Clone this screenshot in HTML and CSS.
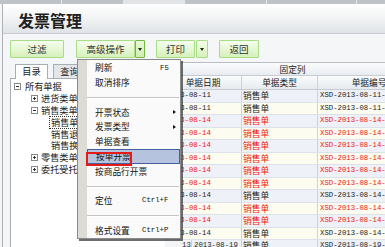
FILE: index.html
```html
<!DOCTYPE html>
<html>
<head>
<meta charset="utf-8">
<link rel="stylesheet" href="styles.css">
</head>
<body>
<div class="topstrip">
  <span class="seg s1"></span><span class="seg s2"></span><span class="seg s3"></span><span class="seg s4"></span><span class="seg s5"></span><span class="seg s6"></span>
</div>
<div class="frame">
  <div class="header"><h1 class="title">发票管理</h1></div>
  <div class="toolbar">
    <button class="btn b-filter">过滤</button>
    <div class="split s-adv"><button class="btn b-adv">高级操作</button><button class="dd dd-on"><span class="tri"></span></button></div>
    <div class="split s-print"><button class="btn b-print">打印</button><button class="dd dd-print"><span class="tri"></span></button></div>
    <button class="btn b-back">返回</button>
  </div>
  <div class="content">
    <div class="side">
      <div class="tabs"><span class="tab tab-on">目录</span><span class="tab">查询</span></div>
      <div class="tree">
        <div class="node l0"><span class="exp minus"></span><span class="lbl">所有单据</span></div>
        <div class="node l1"><span class="exp plus"></span><span class="lbl">进货类单据</span></div>
        <div class="node l1"><span class="exp minus"></span><span class="lbl">销售类单据</span></div>
        <div class="node l2"><span class="lbl sel">销售单</span></div>
        <div class="node l2"><span class="lbl">销售退货</span></div>
        <div class="node l2"><span class="lbl">销售换货</span></div>
        <div class="node l1"><span class="exp plus"></span><span class="lbl">零售类单据</span></div>
        <div class="node l1"><span class="exp plus"></span><span class="lbl">委托受托单</span></div>
      </div>
    </div>
    <div class="grid">
      <div class="g-group">固定列</div>
      <div class="g-head"><span class="c c-date">单据日期</span><span class="c c-type">单据类型</span><span class="c c-no">单据编号</span></div>
      <div class="row odd"><span class="c c-date m">2013-08-11</span><span class="c c-type">销售单</span><span class="c c-no m">XSD-2013-08-11-0001</span></div>
      <div class="row even"><span class="c c-date m">2013-08-11</span><span class="c c-type">销售单</span><span class="c c-no m">XSD-2013-08-11-0002</span></div>
      <div class="row odd red"><span class="c c-date m">2013-08-14</span><span class="c c-type">销售单</span><span class="c c-no m">XSD-2013-08-14-0001</span></div>
      <div class="row even red"><span class="c c-date m">2013-08-14</span><span class="c c-type">销售单</span><span class="c c-no m">XSD-2013-08-14-0002</span></div>
      <div class="row odd red"><span class="c c-date m">2013-08-14</span><span class="c c-type">销售单</span><span class="c c-no m">XSD-2013-08-14-0003</span></div>
      <div class="row even red"><span class="c c-date m">2013-08-14</span><span class="c c-type">销售单</span><span class="c c-no m">XSD-2013-08-14-0004</span></div>
      <div class="row odd red"><span class="c c-date m">2013-08-14</span><span class="c c-type">销售单</span><span class="c c-no m">XSD-2013-08-14-0005</span></div>
      <div class="row even red"><span class="c c-date m">2013-08-14</span><span class="c c-type">销售单</span><span class="c c-no m">XSD-2013-08-14-0006</span></div>
      <div class="row odd"><span class="c c-date m">2013-08-14</span><span class="c c-type">销售单</span><span class="c c-no m">XSD-2013-08-14-0007</span></div>
      <div class="row even red"><span class="c c-date m">2013-08-14</span><span class="c c-type">销售单</span><span class="c c-no m">XSD-2013-08-14-0008</span></div>
      <div class="row odd red"><span class="c c-date m">2013-08-14</span><span class="c c-type">销售单</span><span class="c c-no m">XSD-2013-08-14-0009</span></div>
      <div class="row even"><span class="c c-date m">2013-08-14</span><span class="c c-type">销售单</span><span class="c c-no m">XSD-2013-08-14-0010</span></div>
      <div class="row odd last"><span class="c c-num m">13</span><span class="c c-date2 m">2013-08-19</span><span class="c c-type">销售单</span><span class="c c-no m">XSD-2013-08-19-0001</span></div>
    </div>
  </div>
</div>

<div class="menu">
  <div class="mi"><span class="mt">刷新</span><span class="ms m">F5</span></div>
  <div class="mi"><span class="mt">取消排序</span></div>
  <div class="msep"></div>
  <div class="mi"><span class="mt">开票状态</span><span class="arrow"></span></div>
  <div class="mi"><span class="mt">发票类型</span><span class="arrow"></span></div>
  <div class="mi"><span class="mt">单据查看</span></div>
  <div class="mi mi-hot"><span class="mt">按单开票</span></div>
  <div class="mi"><span class="mt">按商品行开票</span></div>
  <div class="msep"></div>
  <div class="mi"><span class="mt">定位</span><span class="ms m">Ctrl+F</span></div>
  <div class="msep"></div>
  <div class="mi"><span class="mt">格式设置</span><span class="ms m">Ctrl+P</span></div>
  <div class="redbox"></div>
</div>
</body>
</html>
```

FILE: styles.css
```css
* { box-sizing: border-box; }
html, body { margin: 0; padding: 0; }
body {
  width: 385px;
  height: 247px;
  overflow: hidden;
  position: relative;
  background: #f3f5f7;
  font-family: "Noto Sans CJK SC", "Noto Sans", sans-serif;
  color: #222;
}
.m { font-family: "Liberation Mono", "DejaVu Sans Mono", monospace; font-size: 7.3px; }

/* top strip */
.topstrip { height: 4px; display: flex; background: #c2c6ca; }
.seg { height: 4px; border-right: 1px solid #e4e6e8; background: #bfc3c7; }
.s1 { width: 62px; }
.s2 { width: 62px; }
.s3 { width: 61px; background: #e2e4e6; }
.s4 { width: 82px; }
.s5 { width: 90px; }
.s6 { flex: 1; border-right: 0; }

/* frame */
.frame {
  margin-left: 2px;
  border-left: 1px solid #aeb2b6;
  height: 243px;
  background: #f3f5f7;
}
.header {
  height: 30px;
  border-top: 1px solid #fff;
  border-bottom: 1px solid #c9cdd1;
  background: linear-gradient(#fefefe, #f4f5f6 40%, #dfe3e7);
  display: flex;
  align-items: center;
  padding-left: 15px;
}
.title {
  margin: 0;
  font-size: 16px;
  font-weight: 700;
  color: #1e1e1e;
  line-height: 16px;
  padding-top: 1px;
}

/* toolbar */
.toolbar {
  height: 27px;
  display: flex;
  align-items: flex-start;
  padding: 6px 0 0 7px;
  background: #f4f6f8;
}
.btn, .dd {
  height: 18px;
  margin: 0;
  padding: 0;
  border: 1px solid #a9dc86;
  background: linear-gradient(#f6fdee, #e3f6cf 60%, #d6f0bb);
  font-family: "Noto Sans CJK SC", sans-serif;
  font-size: 9.5px;
  line-height: 16px;
  color: #333;
  border-radius: 1px;
}
.b-filter { width: 54px; }
.split { display: flex; margin-left: 12px; }
.s-print { margin-left: 11px; }
.b-adv { width: 59px; }
.b-print { width: 39px; }
.b-back { width: 40px; margin-left: 11px; }
.dd { width: 10px; position: relative; }
.dd-print { width: 12px; margin-left: 1px; }
.dd-on { border: 1px solid #74b843; background: linear-gradient(#eaf8da, #cfeeb0); }
.tri {
  position: absolute; left: 50%; top: 7px; margin-left: -2px;
  width: 0; height: 0;
  border-left: 2px solid transparent; border-right: 2px solid transparent;
  border-top: 3px solid #222;
}

/* content */
.content { display: flex; height: 186px; }
.side { width: 162px; padding: 3px 0 0 7px; flex: none; }
.tabs { display: flex; height: 14px; padding-left: 5px; gap: 5px; }
.tab {
  width: 33px; height: 14px;
  border: 1px solid #a8aeb4; border-bottom: 0;
  background: #e2e6ea;
  font-size: 9.2px; line-height: 13px; text-align: center; color: #222;
}
.tab-on { background: #fff; height: 15px; position: relative; z-index: 1; }
.tree {
  height: 172px;
  border-top: 1px solid #a8aeb4;
  border-left: 1px solid #a8aeb4;
  background: #fff;
  padding-top: 2px;
}
.node { height: 11.8px; display: flex; align-items: center; font-size: 9.2px; line-height: 11px; white-space: nowrap; color: #222; }
.l0 { padding-left: 3px; }
.l1 { padding-left: 20px; }
.l2 { padding-left: 40px; }
.exp {
  width: 7px; height: 7px; border: 1px solid #8a8a8a; background: #fff;
  position: relative; margin-right: 3px; flex: none;
}
.exp::before {
  content: ""; position: absolute; left: 1px; top: 2px; width: 3px; height: 1px; background: #333;
}
.plus::after {
  content: ""; position: absolute; left: 2px; top: 1px; width: 1px; height: 3px; background: #333;
}
.l0 .exp { margin-right: 4px; }
.sel { outline: 1px dotted #333; outline-offset: 0; padding: 0 1px; margin-left: -1px; }

/* grid */
.grid { flex: none; width: 260px; padding-top: 1px; }
.g-group {
  height: 14px; width: 255px;
  border-top: 1px solid #b8bec4; border-bottom: 1px solid #c6ccd2;
  background: linear-gradient(#fbfcfd, #e8ecf0);
  text-align: center; font-size: 8.7px; line-height: 13px; color: #222;
}
.g-head, .row { display: flex; width: 255px; }
.g-head { height: 14px; background: linear-gradient(#fbfcfd, #e6eaee); border-bottom: 1px solid #c6ccd2; }
.g-head .c { text-align: center; font-size: 8.7px; line-height: 13px; }
.c { flex: none; border-right: 1px solid #ccd2d8; overflow: hidden; white-space: nowrap; }
.c-date { width: 77px; }
.c-num { width: 27px; }
.c-date2 { width: 50px; }
.c-type { width: 76px; }
.c-no { width: 102px; border-right: 0; }
.row { height: 12.5px; border-bottom: 1px solid #dde2e8; }
.row .c { font-size: 8.7px; line-height: 11.5px; padding-left: 2px; }
.row .c.m { font-size: 7.3px; }
.row .c-type { padding-left: 1px; }
.row .c-num { padding-left: 17px; background: #f3f5f7; }
.odd { background: #eef2f8; }
.even { background: #fcfcf1; }
.red { color: #f2140f; }

/* dropdown menu */
.menu {
  position: absolute;
  left: 77px; top: 59px;
  width: 104px; height: 180px;
  border: 1px solid #8a8a8a;
  background: linear-gradient(90deg, #dcdbd6 0, #dcdbd6 9px, #fafafa 9px);
  box-shadow: 2px 2px 0 rgba(60,60,60,0.75);
  padding-top: 0.5px;
}
.mi {
  height: 14.75px; display: flex; align-items: center; position: relative;
  padding-left: 17px; font-size: 8.7px; color: #111; white-space: nowrap;
}
.ms { position: absolute; left: 64px; top: 0; line-height: 14.75px; }
.mi:first-child .ms { left: 82px; }
.arrow {
  position: absolute; left: 95px; top: 5px; width: 0; height: 0;
  border-top: 2.5px solid transparent; border-bottom: 2.5px solid transparent;
  border-left: 3px solid #111;
}
.msep { height: 14.75px; position: relative; }
.msep::after {
  content: ""; position: absolute; left: 9px; right: 1px; top: 7px;
  height: 1px; background: #c4c4c4; border-bottom: 1px solid #fff; box-sizing: content-box;
}
.mi-hot {
  margin-left: 9px; padding-left: 8px;
  background: #b6c3de; border: 1px solid #42609e;
}
.redbox {
  position: absolute; left: 8px; top: 92px;
  width: 46px; height: 14px;
  border: 2px solid #e41b17;
}
```
